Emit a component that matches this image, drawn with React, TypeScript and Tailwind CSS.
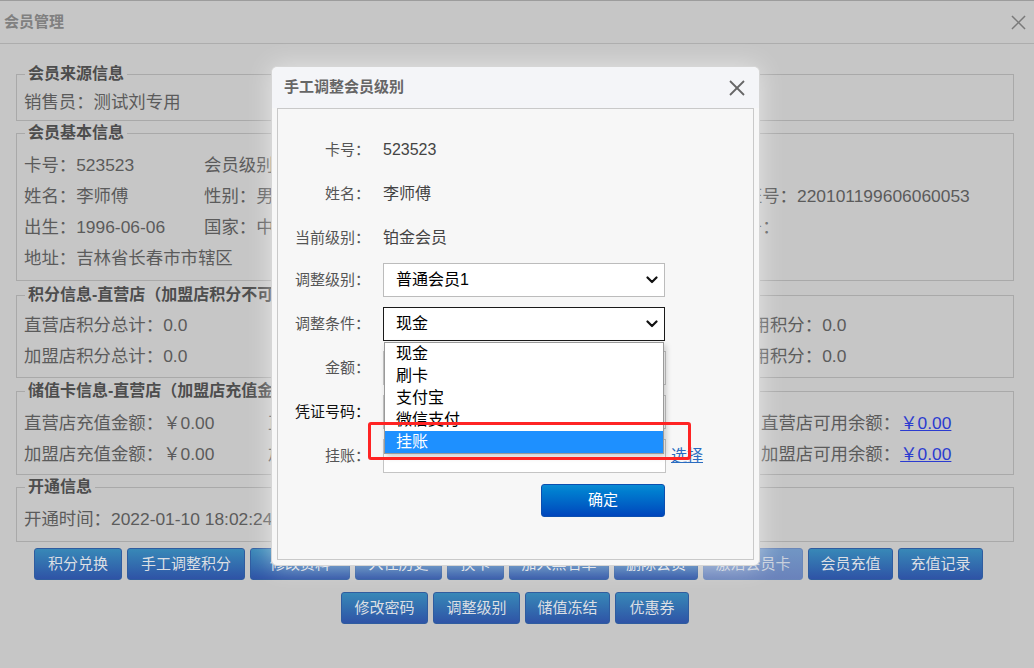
import React from "react";

const font = "font-['Liberation_Sans','Noto_Sans_CJK_SC',sans-serif]";

type Btn = { label: string; w: string; off?: boolean };

const row1: Btn[] = [
  { label: "积分兑换", w: "w-[88px]" },
  { label: "手工调整积分", w: "w-[118px]" },
  { label: "修改资料", w: "w-[100px]" },
  { label: "入住历史", w: "w-[87px]" },
  { label: "换卡", w: "w-[57px]" },
  { label: "加入黑名单", w: "w-[100px]" },
  { label: "删除会员", w: "w-[84px]" },
  { label: "激活会员卡", w: "w-[100px]", off: true },
  { label: "会员充值", w: "w-[85px]" },
  { label: "充值记录", w: "w-[85px]" },
];

const row2: Btn[] = [
  { label: "修改密码", w: "w-[87px]" },
  { label: "调整级别", w: "w-[87px]" },
  { label: "储值冻结", w: "w-[85px]" },
  { label: "优惠券", w: "w-[74px]" },
];

function ActionButton({ b }: { b: Btn }) {
  return (
    <button
      type="button"
      className={`${b.w} h-[32px] rounded-[3px] border text-[15px] leading-[30px] text-center ${
        b.off
          ? "border-[#6a86b8] bg-gradient-to-b from-[#7196c4] to-[#6a82bb] text-[#c9d0dc]"
          : "border-[#2f5c9f] bg-gradient-to-b from-[#3888b7] to-[#2f53a6] text-[#dcdfe4]"
      }`}
    >
      {b.label}
    </button>
  );
}

function Group({
  title,
  cls,
  children,
}: {
  title: string;
  cls: string;
  children: React.ReactNode;
}) {
  return (
    <fieldset className={`border border-[#a9a9a9] px-[7px] ${cls}`}>
      <legend className="ml-[1px] px-[3px] text-[16px] leading-[20px] font-bold text-[#4d4d4d] whitespace-nowrap">
        {title}
      </legend>
      {children}
    </fieldset>
  );
}

function Row({ children }: { children: React.ReactNode }) {
  return <div className="flex h-[31px] items-center whitespace-nowrap">{children}</div>;
}

function Chevron() {
  return (
    <svg width="12" height="8" viewBox="0 0 12 8" className="shrink-0">
      <polyline points="1.5,1.5 6,6 10.5,1.5" fill="none" stroke="#111" strokeWidth="2.2" strokeLinecap="round" strokeLinejoin="round" />
    </svg>
  );
}

function CloseX({ size, color, sw }: { size: number; color: string; sw: number }) {
  return (
    <svg width={size} height={size} viewBox="0 0 16 16">
      <line x1="1" y1="1" x2="15" y2="15" stroke={color} strokeWidth={sw} />
      <line x1="15" y1="1" x2="1" y2="15" stroke={color} strokeWidth={sw} />
    </svg>
  );
}

function FormRow({
  label,
  dark,
  cls,
  children,
}: {
  label: string;
  dark?: boolean;
  cls: string;
  children?: React.ReactNode;
}) {
  return (
    <div className={`flex items-center ${cls}`}>
      <div className={`w-[92px] text-right text-[15px] ${dark ? "text-[#111]" : "text-[#555]"}`}>{label}</div>
      <div className="ml-[13px] flex items-center">{children}</div>
    </div>
  );
}

const payOptions = ["现金", "刷卡", "支付宝", "微信支付", "挂账"];

export default function App() {
  return (
    <div className={`relative w-[1034px] h-[668px] overflow-hidden bg-[#c6c6c6] text-[#5b5b5b] ${font}`}>
      <div className="flex h-[44px] items-center justify-between border-t border-b border-t-[#9c9c9c] border-b-[#adadad] pl-[4px] pr-[8px]">
        <span className="text-[15px] font-bold text-[#808080]">会员管理</span>
        <CloseX size={15} color="#7a7a7a" sw={1.6} />
      </div>

      <div className="pl-[16px] pr-[20px] pt-[20px] text-[17.4px]">
        <Group title="会员来源信息" cls="pt-[3px] pb-[2px]">
          <Row>销售员：测试刘专用</Row>
        </Group>

        <Group title="会员基本信息" cls="mt-[2px] pt-[7px] pb-[6px]">
          <Row>
            <span className="w-[180px]">卡号：523523</span>
            <span>会员级别：铂金会员</span>
          </Row>
          <Row>
            <span className="w-[180px]">姓名：李师傅</span>
            <span className="w-[506px]">性别：男</span>
            <span>身份证号：220101199606060053</span>
          </Row>
          <Row>
            <span className="w-[180px]">出生：1996-06-06</span>
            <span className="w-[506px]">国家：中国</span>
            <span>手机号：</span>
          </Row>
          <Row>地址：吉林省长春市市辖区</Row>
        </Group>

        <Group title="积分信息-直营店（加盟店积分不可用）" cls="mt-[4px] pt-[5px] pb-[5px]">
          <Row>
            <span className="w-[659px]">直营店积分总计：0.0</span>
            <span>直营店可用积分：0.0</span>
          </Row>
          <Row>
            <span className="w-[659px]">加盟店积分总计：0.0</span>
            <span>加盟店可用积分：0.0</span>
          </Row>
        </Group>

        <Group title="储值卡信息-直营店（加盟店充值金额不可用）" cls="mt-[3px] pt-[7px] pb-[4px]">
          <Row>
            <span className="w-[244px]">直营店充值金额：￥0.00</span>
            <span className="w-[493px]">直营店赠送金额：￥0.00</span>
            <span>
              直营店可用余额：<span className="text-[#2b3bd0] underline">￥0.00</span>
            </span>
          </Row>
          <Row>
            <span className="w-[244px]">加盟店充值金额：￥0.00</span>
            <span className="w-[493px]">加盟店赠送金额：￥0.00</span>
            <span>
              加盟店可用余额：<span className="text-[#2b3bd0] underline">￥0.00</span>
            </span>
          </Row>
        </Group>

        <Group title="开通信息" cls="mt-[2px] pt-[7px] pb-[6px]">
          <Row>开通时间：2022-01-10 18:02:24</Row>
        </Group>

        <div className="mt-[6px] flex justify-center gap-[5px] pr-[13px]">
          {row1.map((b) => (
            <ActionButton key={b.label} b={b} />
          ))}
        </div>
        <div className="mt-[12px] flex justify-center gap-[5px]">
          {row2.map((b) => (
            <ActionButton key={b.label} b={b} />
          ))}
        </div>
      </div>

      {/* dialog */}
      <div className="absolute left-[271px] top-[66px] w-[489px] h-[500px] rounded-[6px] border border-[#d6d6d6] bg-[#f7f7f7] shadow-[0_0_26px_rgba(255,255,255,0.55)]">
        <div className="flex h-[41px] items-center justify-between rounded-t-[6px] bg-[#f4f5f8] pl-[12px] pr-[14px]">
          <span className="text-[15px] font-bold text-[#666]">手工调整会员级别</span>
          <CloseX size={16} color="#666" sw={1.8} />
        </div>

        <div className="ml-[5px] h-[452px] w-[477px] border border-[#c9c9c9] bg-[#f7f7f7] pt-[19px]">
          <FormRow label="卡号：" cls="h-[44px]">
            <span className="text-[16px] text-[#444]">523523</span>
          </FormRow>
          <FormRow label="姓名：" cls="h-[44px]">
            <span className="text-[16px] text-[#444]">李师傅</span>
          </FormRow>
          <FormRow label="当前级别：" cls="h-[44px]">
            <span className="text-[16px] text-[#444]">铂金会员</span>
          </FormRow>
          <FormRow label="调整级别：" cls="mt-[3px] h-[34px]">
            <div className="flex h-[34px] w-[282px] items-center justify-between border border-[#bcbcbc] bg-white pl-[12px] pr-[6px] text-[16px] text-black">
              <span>普通会员1</span>
              <Chevron />
            </div>
          </FormRow>
          <FormRow label="调整条件：" cls="mt-[10px] h-[34px]">
            <div className="relative flex h-[34px] w-[282px] items-center justify-between border border-[#1a1a1a] bg-white pl-[12px] pr-[6px] text-[16px] text-black">
              <span>现金</span>
              <Chevron />
              <ul className="absolute left-0 top-[34px] w-[280px] border border-[#9a9a9a] bg-white shadow-[2px_3px_6px_rgba(0,0,0,0.2)]">
                {payOptions.map((o, i) => (
                  <li
                    key={o}
                    className={`h-[22px] pl-[11px] text-[16px] leading-[22px] ${
                      i === payOptions.length - 1 ? "bg-[#1e90ff] text-white" : "text-black"
                    }`}
                  >
                    {o}
                  </li>
                ))}
              </ul>
            </div>
          </FormRow>
          <FormRow label="金额：" cls="mt-[10px] h-[34px]">
            <div className="h-[34px] w-[283px] border border-[#c4c4c4] bg-white" />
          </FormRow>
          <FormRow label="凭证号码：" dark cls="mt-[10px] h-[34px]">
            <div className="h-[34px] w-[283px] border border-[#c4c4c4] bg-white" />
          </FormRow>
          <FormRow label="挂账：" cls="mt-[10px] h-[34px]">
            <div className="h-[34px] w-[283px] border border-[#c4c4c4] bg-white" />
            <span className="ml-[5px] text-[16px] text-[#2a6cc0] underline">选择</span>
          </FormRow>
          <div className="mt-[11px] pl-[263px]">
            <button
              type="button"
              className="h-[33px] w-[124px] rounded-[3px] border border-[#0b4fb0] bg-gradient-to-b from-[#0b8bd4] to-[#0045bc] text-[15px] text-white"
            >
              确定
            </button>
          </div>
        </div>

        <div className="absolute left-[96px] top-[355px] h-[38px] w-[323px] rounded-[3px] border-[3px] border-[#ff2424]" />
      </div>
    </div>
  );
}
